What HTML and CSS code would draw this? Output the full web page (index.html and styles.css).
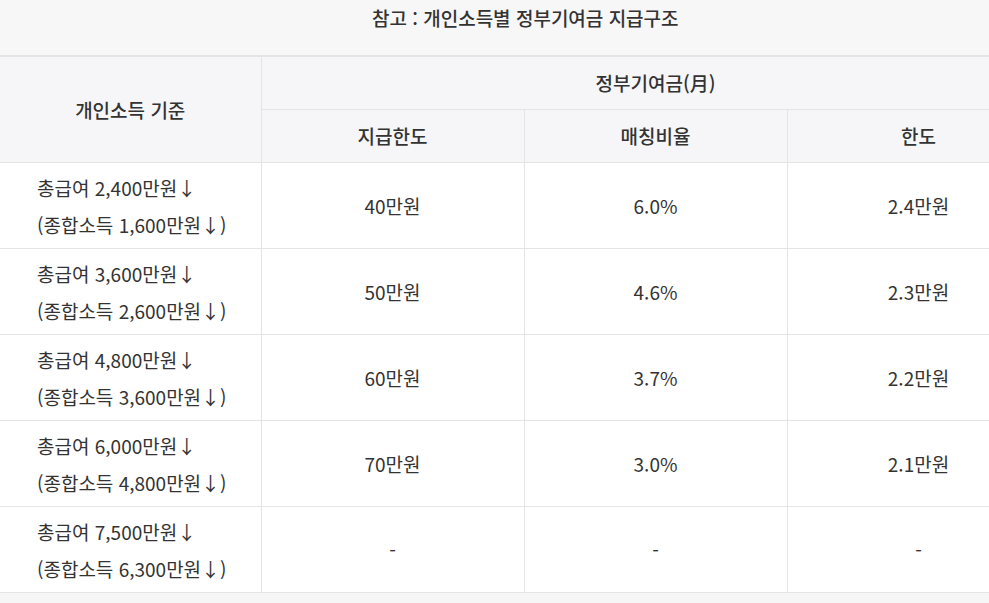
FILE: index.html
```html
<!DOCTYPE html>
<html lang="ko">
<head>
<meta charset="utf-8">
<title>개인소득별 정부기여금 지급구조</title>
<link rel="stylesheet" href="styles.css">
</head>
<body>
<div class="wrap">
  <table class="grant">
    <caption class="title">참고 : 개인소득별 정부기여금 지급구조</caption>
    <colgroup>
      <col class="c1"><col class="c2"><col class="c3"><col class="c4">
    </colgroup>
    <thead>
      <tr class="h1">
        <th rowspan="2">개인소득 기준</th>
        <th colspan="3">정부기여금(月)</th>
      </tr>
      <tr class="h2">
        <th>지급한도</th>
        <th>매칭비율</th>
        <th>한도</th>
      </tr>
    </thead>
    <tbody>
      <tr>
        <td class="income"><p>총급여 2,400만원↓</p><p>(종합소득 1,600만원↓)</p></td>
        <td>40만원</td><td>6.0%</td><td>2.4만원</td>
      </tr>
      <tr>
        <td class="income"><p>총급여 3,600만원↓</p><p>(종합소득 2,600만원↓)</p></td>
        <td>50만원</td><td>4.6%</td><td>2.3만원</td>
      </tr>
      <tr>
        <td class="income"><p>총급여 4,800만원↓</p><p>(종합소득 3,600만원↓)</p></td>
        <td>60만원</td><td>3.7%</td><td>2.2만원</td>
      </tr>
      <tr>
        <td class="income"><p>총급여 6,000만원↓</p><p>(종합소득 4,800만원↓)</p></td>
        <td>70만원</td><td>3.0%</td><td>2.1만원</td>
      </tr>
      <tr>
        <td class="income"><p>총급여 7,500만원↓</p><p>(종합소득 6,300만원↓)</p></td>
        <td>-</td><td>-</td><td>-</td>
      </tr>
    </tbody>
  </table>
</div>
</body>
</html>
```
FILE: styles.css
```css
html, body {
  margin: 0;
  padding: 0;
}
body {
  background: #f6f6f6;
  font-family: "Noto Sans CJK KR", "Noto Sans", sans-serif;
  color: #333;
  overflow: hidden;
}
.wrap {
  width: 989px;
  overflow: hidden;
}
.grant {
  width: 1050px;
  border-collapse: collapse;
  table-layout: fixed;
  font-size: 19px;
  letter-spacing: 0;
}
.c1 { width: 261px; }
.c2 { width: 263px; }
.c3 { width: 263px; }
.c4 { width: 263px; }
.title {
  background: #f7f7f7;
  height: 56px;
  box-sizing: border-box;
  padding: 3px 0 0;
  line-height: 30px;
  vertical-align: top;
  font-weight: 500;
  text-align: center;
  border-bottom: 1px solid #e4e4e4;
}
.grant th {
  background: #f6f6f8;
  font-weight: 500;
  border: 1px solid #e4e4e4;
  padding: 0;
  line-height: 28px;
}
.grant th:first-child { border-left: none; }
.h1 th { height: 52px; }
.h2 th { height: 52px; }
.grant td {
  background: #fff;
  border: 1px solid #e4e4e4;
  text-align: center;
  padding: 0;
  height: 85px;
}
.grant td:first-child { border-left: none; }
.grant td.income {
  text-align: left;
  padding: 0 0 0 37px;
}
.income p {
  margin: 0;
  line-height: 37px;
}
```
